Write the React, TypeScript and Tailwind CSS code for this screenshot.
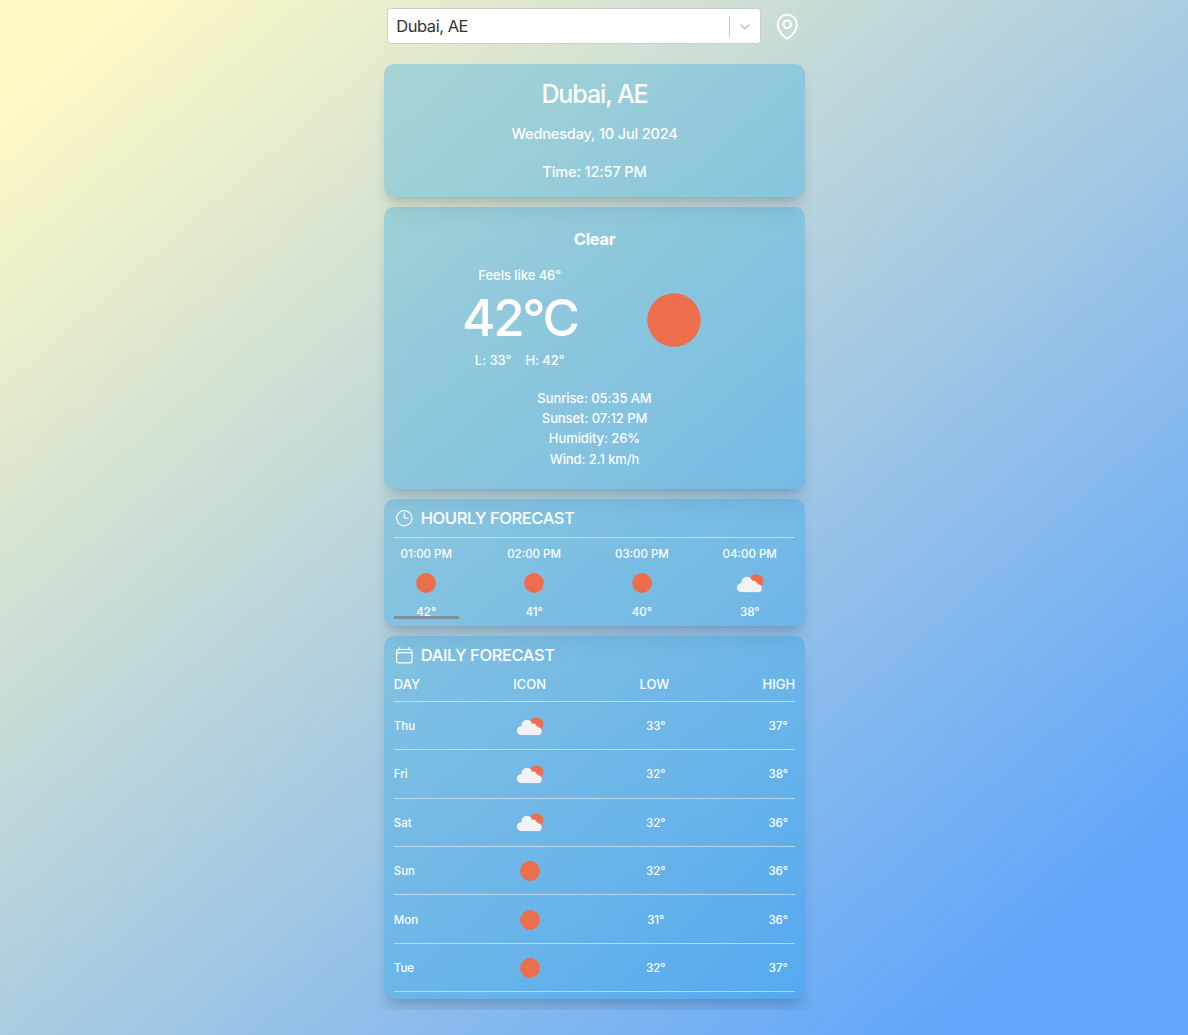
import React from "react";

const SUN = "#ec6e4c";

function SunIcon({ size }: { size: number }) {
  return (
    <svg width={size} height={size} viewBox="0 0 20 20" className="block">
      <circle cx="10" cy="10" r="9.9" fill={SUN} />
    </svg>
  );
}

function CloudIcon() {
  return (
    <svg width="28" height="19" viewBox="0 0 28 19" className="block">
      <circle cx="20.4" cy="7.3" r="7" fill={SUN} />
      <g fill="#f2f2f2">
        <circle cx="10.9" cy="8.3" r="5.5" />
        <circle cx="5.2" cy="13.7" r="4.4" />
        <circle cx="17.2" cy="10" r="3.5" />
        <circle cx="21.8" cy="14.2" r="3.9" />
        <rect x="5.3" y="9.2" width="16.5" height="8.9" />
      </g>
    </svg>
  );
}

function ClockIcon() {
  return (
    <svg width="20.5" height="20.5" viewBox="0 0 24 24" fill="none" stroke="white" strokeWidth="1.4" strokeLinecap="round" strokeLinejoin="round">
      <path d="M12 6v6h4.5m4.5 0a9 9 0 1 1-18 0 9 9 0 0 1 18 0Z" />
    </svg>
  );
}

function CalendarIcon() {
  return (
    <svg width="20.5" height="20.5" viewBox="0 0 24 24" fill="none" stroke="white" strokeWidth="1.4" strokeLinecap="round" strokeLinejoin="round">
      <path d="M6.75 3v2.25M17.25 3v2.25M3 18.75V7.5a2.25 2.25 0 0 1 2.25-2.25h13.5A2.25 2.25 0 0 1 21 7.5v11.25m-18 0A2.25 2.25 0 0 0 5.25 21h13.5A2.25 2.25 0 0 0 21 18.75m-18 0v-7.5A2.25 2.25 0 0 1 5.25 9h13.5A2.25 2.25 0 0 1 21 11.25v7.5" />
    </svg>
  );
}

const CARD =
  "rounded-[10px] bg-[rgba(28,162,228,0.3)] px-[10px] shadow-[0_17px_21px_-4px_rgba(0,0,0,0.1),0_7px_9px_-5px_rgba(0,0,0,0.14)]";

const hours = [
  { time: "01:00 PM", temp: "42°", cloudy: false },
  { time: "02:00 PM", temp: "41°", cloudy: false },
  { time: "03:00 PM", temp: "40°", cloudy: false },
  { time: "04:00 PM", temp: "38°", cloudy: true },
];

const days = [
  { day: "Thu", low: "33°", high: "37°", cloudy: true },
  { day: "Fri", low: "32°", high: "38°", cloudy: true },
  { day: "Sat", low: "32°", high: "36°", cloudy: true },
  { day: "Sun", low: "32°", high: "36°", cloudy: false },
  { day: "Mon", low: "31°", high: "36°", cloudy: false },
  { day: "Tue", low: "32°", high: "37°", cloudy: false },
];

export default function App() {
  return (
    <div className="flex h-[1035px] flex-col items-center overflow-hidden bg-[linear-gradient(to_bottom_right,#fff9c4_5%,#60a5fa_90%)] font-['Inter',sans-serif] font-medium text-white">
      <div className="ml-px h-[1009.5px] w-[434px] overflow-hidden px-[6.25px] pt-[8px]">
        <div className="ml-[3.5px] flex h-[36px] items-center">
          <div className="flex h-[36px] w-[374px] items-center rounded-[3.5px] border border-[#ccc] bg-white">
            <span className="flex-1 pl-[8px] text-[16.5px] font-normal tracking-[-0.45px] text-[#333]">Dubai, AE</span>
            <span className="h-[21px] w-px bg-[#ccc]" />
            <svg width="30" height="17" viewBox="0 0 20 20" fill="#ccc">
              <path d="M4.516 7.548c0.436-0.446 1.043-0.481 1.576 0l3.908 3.747 3.908-3.747c0.533-0.481 1.141-0.446 1.574 0 0.436 0.445 0.408 1.197 0 1.615-0.406 0.418-4.695 4.502-4.695 4.502-0.217 0.223-0.502 0.335-0.787 0.335s-0.57-0.112-0.789-0.335c0 0-4.287-4.084-4.695-4.502s-0.436-1.17 0-1.615z" />
            </svg>
          </div>
          <svg className="ml-[11px]" width="30.5" height="30.5" viewBox="0 0 24 24" fill="none" stroke="white" strokeWidth="1.6" strokeLinecap="round" strokeLinejoin="round">
            <path d="M15 10.5a3 3 0 1 1-6 0 3 3 0 0 1 6 0Z" />
            <path d="M19.5 10.5c0 7.142-7.5 11.25-7.5 11.25S4.5 17.642 4.5 10.5a7.5 7.5 0 1 1 15 0Z" />
          </svg>
        </div>

        <div className="mt-[20.4px] flex flex-col gap-[10px]">
          <section className={`${CARD} h-[132.5px] pt-[12px] text-center`}>
            <h1 className="h-9 text-[25px] leading-9 tracking-[-1.1px]">Dubai, AE</h1>
            <p className="mt-3 h-5 text-[14.5px] leading-5 tracking-[-0.15px]">Wednesday, 10 Jul 2024</p>
            <p className="mt-[18px] h-5 text-[14.5px] leading-5 tracking-[-0.1px]">Time: 12:57 PM</p>
          </section>

          <section className={`${CARD} h-[282.5px] pt-[20.2px] text-center`}>
            <h2 className="h-6 text-[16.5px] font-bold leading-6 tracking-[-0.3px]">Clear</h2>
            <div className="mt-[14px] flex h-[105px] items-center pl-[66px]">
              <div className="w-[120px]">
                <p className="h-5 text-[13px] leading-5 tracking-[-0.05px]">Feels like 46°</p>
                <p className="my-[7.5px] h-[50px] text-[51px] leading-[50px] tracking-[-2.4px]">42°C</p>
                <p className="flex h-5 justify-center gap-[14px] text-[13px] leading-5 tracking-[-0.05px]">
                  <span>L: 33°</span>
                  <span>H: 42°</span>
                </p>
              </div>
              <div className="ml-[67px] mt-[5px]">
                <SunIcon size={54} />
              </div>
            </div>
            <div className="mt-[17.7px] text-[13px] leading-[20.3px] tracking-[-0.08px]">
              <p>Sunrise: 05:35 AM</p>
              <p>Sunset: 07:12 PM</p>
              <p>Humidity: 26%</p>
              <p>Wind: 2.1 km/h</p>
            </div>
          </section>

          <section className={`${CARD} h-[127px]`}>
            <div className="flex h-[38.7px] items-center gap-[6.5px] border-b border-white/50">
              <ClockIcon />
              <h3 className="text-[16.5px] tracking-[-0.42px]">HOURLY FORECAST</h3>
            </div>
            <div className="relative flex h-[81px] justify-between pr-[13px] pt-[7px]">
              {hours.map((h) => (
                <div key={h.time} className="flex w-[65px] flex-col items-center">
                  <span className="h-[18px] shrink-0 whitespace-nowrap text-[11.5px] leading-[18px]">{h.time}</span>
                  <span className="flex h-[40px] shrink-0 items-center">
                    {h.cloudy ? <CloudIcon /> : <SunIcon size={20} />}
                  </span>
                  <span className="h-[18px] shrink-0 text-[11.5px] leading-[18px]">{h.temp}</span>
                </div>
              ))}
              <div className="absolute bottom-0 left-0 h-[3.5px] w-[65px] bg-[#7b8f9c]" />
            </div>
          </section>

          <section className={`${CARD} h-[362.5px]`}>
            <div className="flex h-[37.5px] items-center gap-[6.5px]">
              <CalendarIcon />
              <h3 className="text-[16.5px] tracking-[-0.42px]">DAILY FORECAST</h3>
            </div>
            <div className="flex h-[28px] justify-between border-b border-white/50 text-[13px] leading-[20.6px]">
              <span>DAY</span>
              <span>ICON</span>
              <span>LOW</span>
              <span>HIGH</span>
            </div>
            {days.map((d) => (
              <div key={d.day} className="flex h-[48.4px] items-center border-b border-white/50 pt-[1px] text-[11.5px]">
                <span className="w-[115.5px] pt-[1px]">{d.day}</span>
                <span className="flex w-[42px] justify-center">{d.cloudy ? <CloudIcon /> : <SunIcon size={20} />}</span>
                <span className="ml-[83.5px] w-[42px] pt-[1px] text-center">{d.low}</span>
                <span className="ml-auto w-[34px] pt-[1px] text-center">{d.high}</span>
              </div>
            ))}
          </section>
        </div>
      </div>
    </div>
  );
}
